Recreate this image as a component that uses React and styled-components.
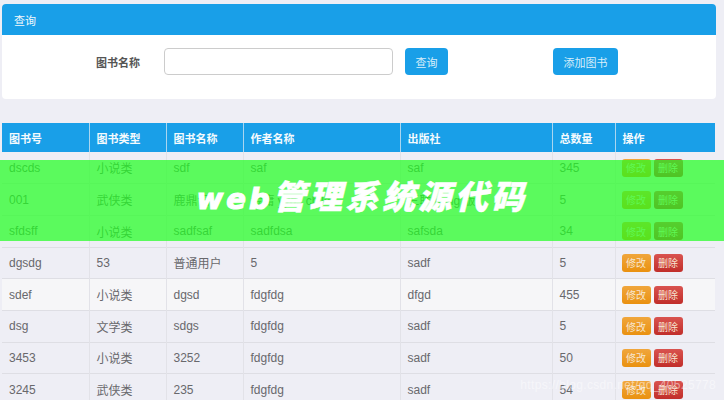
import React from "react";
import styled, { createGlobalStyle } from "styled-components";

const Global = createGlobalStyle`
  html, body { margin: 0; padding: 0; }
  body {
    width: 724px; height: 400px; overflow: hidden; background: #eeeef5;
    font-family: "Liberation Sans", "Noto Sans CJK SC", sans-serif;
    font-size: 12px; color: #555;
  }
`;
const Page = styled.div`
  position: relative; width: 724px; height: 400px; overflow: hidden;
  padding: 4px 8px 0 2px; box-sizing: border-box;
`;
const Panel = styled.section`
  background: #fff; border-radius: 4px; height: 95px; overflow: hidden;
`;
const PanelHead = styled.div`
  height: 31px; background: #199fe8; color: #f2f8fc; padding: 0 12px;
  display: flex; align-items: center; font-size: 11px;
`;
const SearchRow = styled.div`
  display: flex; align-items: center; padding: 13px 0 0 94px; height: 27px;
`;
const Label = styled.label`
  width: 68px; font-size: 11px; font-weight: 700; color: #555;
`;
const Input = styled.input`
  width: 229px; height: 27px; box-sizing: border-box; border: 1px solid #ccc;
  border-radius: 4px; background: #fff; padding: 0; margin: 0;
`;
const Button = styled.button`
  height: 27px; width: ${p => p.$w}px; margin-left: ${p => p.$ml}px; padding: 0;
  border: 0; border-radius: 4px; background: #199fe8; color: #d8eefa;
  font: 11px "Liberation Sans", "Noto Sans CJK SC", sans-serif;
`;
const Table = styled.table`
  margin-top: 24px; width: 713px; table-layout: fixed; border-collapse: collapse;
`;
const Th = styled.th`
  height: 29px; padding: 0 0 0 7px; box-sizing: border-box; background: #199fe8;
  color: #f4fafd; font-size: 11px; font-weight: 700; text-align: left;
  border-left: 1px solid #a9d6f0;
  &:first-child { border-left: 0; }
`;
const Row = styled.tr`
  height: 31.7px;
  background: ${p => (p.$alt ? "#f6f6f8" : "#eeeef5")};
  border-bottom: 1px solid #dedee4;
`;
const Td = styled.td`
  padding: 0 0 0 7px; box-sizing: border-box; font-size: 12px; color: #68686c;
  border-left: 1px solid #e2e2e8; white-space: nowrap; overflow: hidden;
  &:first-child { border-left: 0; }
`;
const Actions = styled.div`
  display: flex; gap: 3px; margin-left: -1px;
`;
const Small = styled.button`
  width: 29px; height: 18px; padding: 0; border: 0; border-radius: 3px;
  color: #f7e6d0; font: 10px "Liberation Sans", "Noto Sans CJK SC", sans-serif;
  background: ${p => (p.$danger
    ? "linear-gradient(#d9534f, #c12e2a)"
    : "linear-gradient(#f0a63c, #ea9110)")};
`;
const Banner = styled.div`
  position: absolute; left: 0; top: 160px; width: 724px; height: 81px;
  background: rgba(35, 255, 35, 0.72); display: flex; align-items: center;
  justify-content: center;
`;
const BannerText = styled.h1`
  margin: 0 0 11px 0; color: #fff; font: italic 900 33px "Noto Sans CJK SC", sans-serif;
  letter-spacing: 3.4px; -webkit-text-stroke: 0.5px #fff; white-space: nowrap;
`;
const Web = styled.span`
  font-family: "DejaVu Sans", sans-serif; font-size: 29px; font-weight: 700;
  letter-spacing: 3px; -webkit-text-stroke: 1.2px #fff;
`;
const Watermark = styled.div`
  position: absolute; right: 8px; top: 378px; color: rgba(255, 255, 255, 0.5);
  font-size: 12px; letter-spacing: 0.35px;
`;

const widths = [87, 77, 77, 157, 152, 63, 100];
const heads = ["图书号", "图书类型", "图书名称", "作者名称", "出版社", "总数量", "操作"];
const rows = [
  ["dscds", "小说类", "sdf", "saf", "saf", "345"],
  ["001", "武侠类", "鹿鼎记", "金庸 yyds child", "三联 jiang 版", "5"],
  ["sfdsff", "小说类", "sadfsaf", "sadfdsa", "safsda", "34"],
  ["dgsdg", "53", "普通用户", "5", "sadf", "5"],
  ["sdef", "小说类", "dgsd", "fdgfdg", "dfgd", "455"],
  ["dsg", "文学类", "sdgs", "fdgfdg", "sadf", "5"],
  ["3453", "小说类", "3252", "fdgfdg", "sadf", "50"],
  ["3245", "武侠类", "235", "fdgfdg", "sadf", "54"],
];

export default function App() {
  return (
    <Page>
      <Global />
      <Panel>
        <PanelHead>查询</PanelHead>
        <SearchRow>
          <Label>图书名称</Label>
          <Input />
          <Button $w={43} $ml={12}>查询</Button>
          <Button $w={65} $ml={105}>添加图书</Button>
        </SearchRow>
      </Panel>
      <Table>
        <colgroup>{widths.map((w, i) => <col key={i} style={{ width: w }} />)}</colgroup>
        <thead>
          <tr>{heads.map(h => <Th key={h}>{h}</Th>)}</tr>
        </thead>
        <tbody>
          {rows.map((r, i) => (
            <Row key={i} $alt={i === 4}>
              {r.map((c, j) => <Td key={j}>{c}</Td>)}
              <Td>
                <Actions>
                  <Small>修改</Small>
                  <Small $danger>删除</Small>
                </Actions>
              </Td>
            </Row>
          ))}
        </tbody>
      </Table>
      <Banner>
        <BannerText><Web>web</Web>管理系统源代码</BannerText>
      </Banner>
      <Watermark>https://blog.csdn.net/qq_40525778</Watermark>
    </Page>
  );
}
